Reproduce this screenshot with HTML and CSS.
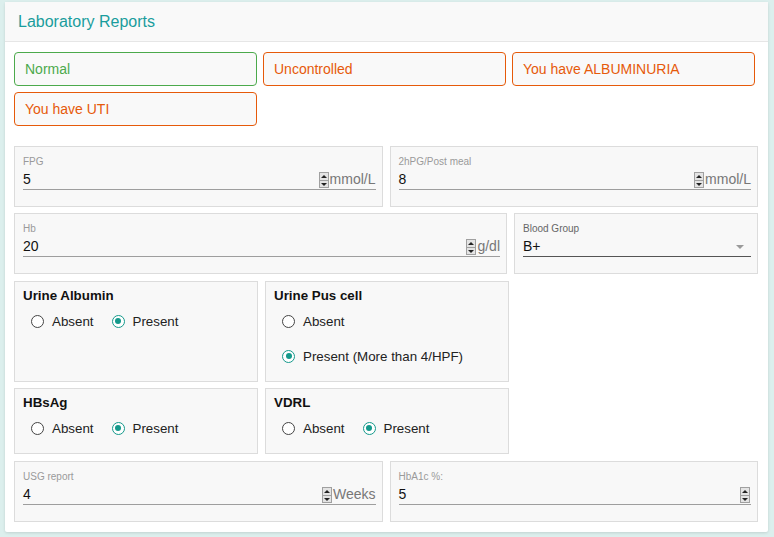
FILE: index.html
```html
<!DOCTYPE html>
<html lang="en">
<head>
<meta charset="utf-8">
<title>Laboratory Reports</title>
<link rel="stylesheet" href="styles.css">
</head>
<body>
<div class="card">
  <div class="card-header"><h2 class="title">Laboratory Reports</h2></div>
  <div class="card-body">
    <div class="alerts">
      <div class="alert ok">Normal</div>
      <div class="alert warn">Uncontrolled</div>
      <div class="alert warn">You have ALBUMINURIA</div>
      <div class="alert warn">You have UTI</div>
    </div>

    <div class="row first">
      <div class="field half">
        <div class="label">FPG</div>
        <div class="input-row">
          <span class="value">5</span>
          <span class="spin"><i class="up"></i><i class="dn"></i></span>
          <span class="unit">mmol/L</span>
        </div>
      </div>
      <div class="field half">
        <div class="label">2hPG/Post meal</div>
        <div class="input-row">
          <span class="value">8</span>
          <span class="spin"><i class="up"></i><i class="dn"></i></span>
          <span class="unit">mmol/L</span>
        </div>
      </div>
    </div>

    <div class="row gap6">
      <div class="field wide">
        <div class="label">Hb</div>
        <div class="input-row">
          <span class="value">20</span>
          <span class="spin"><i class="up"></i><i class="dn"></i></span>
          <span class="unit">g/dl</span>
        </div>
      </div>
      <div class="field narrow">
        <div class="label dark">Blood Group</div>
        <div class="input-row select">
          <span class="value">B+</span>
          <span class="caret"></span>
        </div>
      </div>
    </div>

    <div class="row">
      <div class="rbox">
        <div class="rtitle">Urine Albumin</div>
        <div class="rgroup">
          <label class="opt"><span class="radio"></span>Absent</label>
          <label class="opt"><span class="radio on"></span>Present</label>
        </div>
      </div>
      <div class="rbox">
        <div class="rtitle">Urine Pus cell</div>
        <div class="rgroup stacked">
          <label class="opt"><span class="radio"></span>Absent</label>
          <label class="opt"><span class="radio on"></span>Present (More than 4/HPF)</label>
        </div>
      </div>
    </div>

    <div class="row gap6">
      <div class="rbox">
        <div class="rtitle">HBsAg</div>
        <div class="rgroup">
          <label class="opt"><span class="radio"></span>Absent</label>
          <label class="opt"><span class="radio on"></span>Present</label>
        </div>
      </div>
      <div class="rbox">
        <div class="rtitle">VDRL</div>
        <div class="rgroup">
          <label class="opt"><span class="radio"></span>Absent</label>
          <label class="opt"><span class="radio on"></span>Present</label>
        </div>
      </div>
    </div>

    <div class="row">
      <div class="field half">
        <div class="label">USG report</div>
        <div class="input-row">
          <span class="value">4</span>
          <span class="spin"><i class="up"></i><i class="dn"></i></span>
          <span class="unit">Weeks</span>
        </div>
      </div>
      <div class="field half">
        <div class="label">HbA1c %:</div>
        <div class="input-row">
          <span class="value">5</span>
          <span class="spin"><i class="up"></i><i class="dn"></i></span>
        </div>
      </div>
    </div>
  </div>
</div>
</body>
</html>
```

FILE: styles.css
```css
* { box-sizing: border-box; }
html, body { margin: 0; padding: 0; }
body {
  background: #dcefed;
  font-family: "Liberation Sans", Arial, sans-serif;
  color: #222;
  padding: 2px 6px 6px 5px;
}
.card {
  width: 763px;
  background: #fff;
  border-radius: 2px;
  box-shadow: 0 1px 3px rgba(0,0,0,0.12);
}
.card-header {
  height: 40px;
  background: #f9f9f9;
  border-bottom: 1px solid #e6e6e6;
  padding: 10px 13px 0;
}
.title {
  margin: 0;
  font-weight: normal;
  font-size: 16px;
  line-height: 20px;
  color: #1a9d9d;
}
.card-body {
  padding: 10px 10px 10px 9px;
}
.alerts {
  display: flex;
  flex-wrap: wrap;
  gap: 6px 6px;
  width: 744px;
}
.alert {
  width: 243px;
  height: 34px;
  border: 1px solid;
  border-radius: 4px;
  background: #f9f9f9;
  font-size: 14px;
  line-height: 32px;
  padding-left: 10px;
}
.alert.ok { border-color: #4caa4c; color: #4caa4c; }
.alert.warn { border-color: #e65a0a; color: #e65a0a; }

.row {
  display: flex;
  gap: 7px;
  margin-top: 7px;
  width: 744px;
}
.row.gap6 { margin-top: 6px; }
.row.first { margin-top: 20px; }

.field {
  height: 61px;
  border: 1px solid #dcdcdc;
  background: #f8f8f8;
  padding: 9px 6px 0 8px;
}
.half { flex: 1 1 0; }
.wide { width: 493px; }
.narrow { width: 244px; }
.label {
  font-size: 10px;
  line-height: 12px;
  color: #9a9a9a;
}
.label.dark { color: #666; }
.input-row {
  display: flex;
  align-items: center;
  height: 22px;
  border-bottom: 1px solid #9e9e9e;
}
.input-row.select { border-bottom-color: #555; }
.value {
  flex: 1 1 auto;
  font-size: 14px;
  color: #111;
}
.unit {
  font-size: 14px;
  color: #777;
}
.spin {
  display: flex;
  flex-direction: column;
  width: 10px;
  height: 16px;
  margin: 3px 1px 0 0;
  border: 1px solid #a0a0a0;
  background: #e4e4e4;
}
.spin i {
  flex: 1 1 0;
  position: relative;
}
.spin i.up { border-bottom: 1px solid #a0a0a0; }
.spin i::after {
  content: "";
  position: absolute;
  left: 1px;
  top: 2px;
  border-left: 3px solid transparent;
  border-right: 3px solid transparent;
}
.spin i.up::after { border-bottom: 3px solid #222; }
.spin i.dn::after { border-top: 3px solid #222; top: 2px; }
.caret {
  width: 0;
  height: 0;
  border-left: 4px solid transparent;
  border-right: 4px solid transparent;
  border-top: 4px solid #9a9a9a;
  margin-right: 7px;
  margin-top: 2px;
}

.rbox {
  width: 244px;
  border: 1px solid #dcdcdc;
  background: #f8f8f8;
  padding: 5px 8px 14px;
}
.rtitle {
  font-weight: bold;
  font-size: 13.33px;
  line-height: 18px;
  color: #111;
}
.rgroup {
  display: flex;
  margin-top: 5px;
  padding-left: 8px;
}
.rgroup.stacked { flex-direction: column; gap: 13px; }
.opt {
  display: flex;
  align-items: center;
  height: 22px;
  font-size: 13.33px;
  color: #222;
  margin-right: 18px;
}
.radio {
  width: 13px;
  height: 13px;
  border-radius: 50%;
  border: 1.5px solid #444;
  margin-right: 8px;
  background: #fff;
  display: flex;
  align-items: center;
  justify-content: center;
}
.radio.on { border-color: #14998b; }
.radio.on::after {
  content: "";
  width: 6px;
  height: 6px;
  border-radius: 50%;
  background: #14998b;
}
```
